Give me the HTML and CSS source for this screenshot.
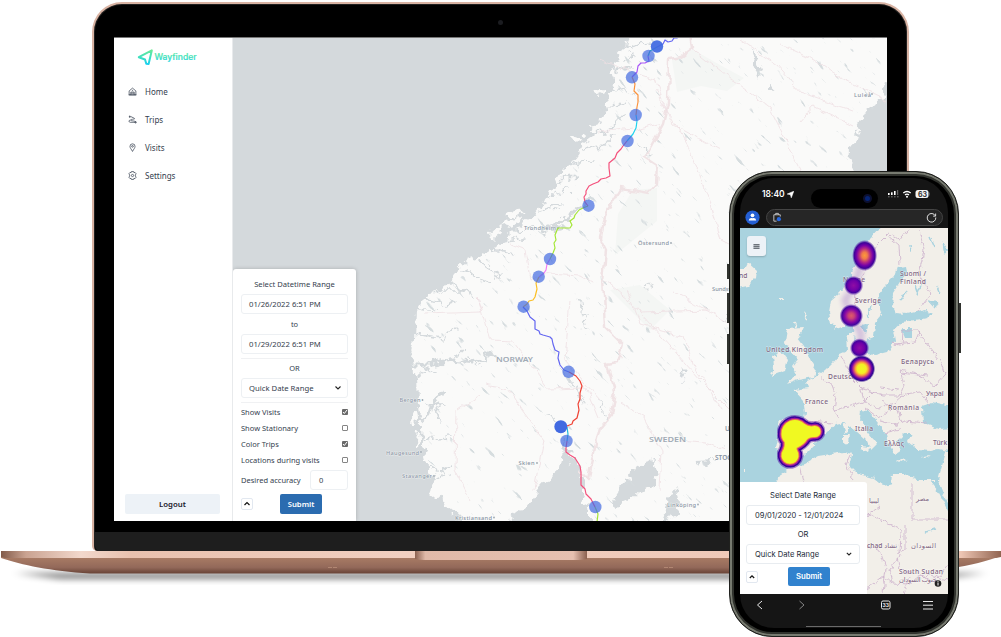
FILE: index.html
```html
<!DOCTYPE html>
<html lang="en">
<head>
<meta charset="utf-8">
<title>Wayfinder</title>
<link rel="stylesheet" href="styles.css">
</head>
<body>
<main class="stage">
  <section class="laptop">
    <div class="lid">
      <div class="camera"></div>
      <div class="display">
        <aside class="sidebar">
          <svg class="logo" viewBox="0 0 62 18">
            <defs><linearGradient id="brand" gradientUnits="userSpaceOnUse" x1="0" y1="1" x2="0" y2="17"><stop offset="0" stop-color="#70ec92"/><stop offset=".5" stop-color="#3fe0bd"/><stop offset="1" stop-color="#14cdf5"/></linearGradient></defs>
            <path d="M1.800 9.200 14.800 2.400 11.600 16 9.300 15.800 8 11.500Z" fill="none" stroke="url(#brand)" stroke-width="2" stroke-linejoin="round"/>
            <text x="17.500" y="11.600" textLength="42" lengthAdjust="spacingAndGlyphs" fill="url(#brand)" stroke="url(#brand)" class="brand-text">Wayfinder</text>
          </svg>
          <nav class="nav">
            <a class="nav-item"><svg viewBox="0 0 16 16"><path d="M2 7 8 2l6 5v7H2ZM1 14h14M5 14V9h6v5M5 11h6M7 6h2"/></svg>Home</a>
            <a class="nav-item"><svg viewBox="0 0 16 16"><path d="M3 1v4M1.500 3h4l6 3c2 2-7 1-7 3s10 1 9 4H4c-3 0-3-4 0-4"/><circle cx="13.500" cy="13" r="1.300"/></svg>Trips</a>
            <a class="nav-item"><svg viewBox="0 0 16 16"><path d="M8 15C6 11 3.500 9 3.500 6a4.500 4.500 0 0 1 9 0c0 3-2.500 5-4.500 9Z"/><circle cx="8" cy="6" r="1.500"/></svg>Visits</a>
            <a class="nav-item"><svg viewBox="0 0 16 16"><path d="m6 1-.5 2-2-.5L1.500 5 3 7v2l-1.500 2 2 2.500 2-.5.5 2h4l.5-2 2 .5 2-2.500L13 9V7l1.500-2-2-2.500-2 .5L10 1Z"/><circle cx="8" cy="8" r="2"/></svg>Settings</a>
          </nav>
          <button class="logout">Logout</button>
        </aside>
        <div class="map-pane">
          <svg class="map" viewBox="233 38 654 483">
            <defs>
              <filter id="ragged" x="-5%" y="-5%" width="110%" height="110%"><feTurbulence type="fractalNoise" baseFrequency=".11" numOctaves="3" seed="4"/><feDisplacementMap in="SourceGraphic" scale="15" xChannelSelector="R" yChannelSelector="G"/></filter>
              <filter id="wobble" x="-5%" y="-5%" width="110%" height="110%" color-interpolation-filters="sRGB"><feTurbulence type="fractalNoise" baseFrequency=".09" numOctaves="2" seed="9"/><feDisplacementMap in="SourceGraphic" scale="8" xChannelSelector="R" yChannelSelector="G"/></filter>
              <filter id="lakes" x="0" y="0" width="100%" height="100%" color-interpolation-filters="sRGB"><feTurbulence type="fractalNoise" baseFrequency=".06 .26" numOctaves="3" seed="12"/><feColorMatrix values="0 0 0 0 .84  0 0 0 0 .865  0 0 0 0 .875  10 0 0 0 -7"/></filter>
              <clipPath id="landclip"><path d="M625 38 612 60 614 88 606 115 596 140 570 168 545 203 510 240 478 266 448 285 425 302 420 340 418 370 424 400 426 435 428 460 445 495 470 519 498 519 523 503 545 475 562 450 577 470 588 521 887 521V190L846 180 850 140 887 90V38Z"/></clipPath>
            </defs>
            <rect x="233" y="38" width="654" height="483" fill="#d4d9dc"/>
            <g filter="url(#ragged)">
              <path fill="#fafaf9" d="M632 20 626 46 615 58 611 74 617 86 609 96 605 114 597 124 593 138 581 146 571 161 561 174 552 190 541 205 531 218 515 229 503 241 489 253 469 260 454 274 443 287 426 294 416 310 415 340 411 356 417 377 418 402 422 424 423 448 428 468 434 478 431 494 444 504 460 518 471 530H495L521 510 538 491 551 477 561 468 564 441 571 456 578 469 584 479 584 500 590 513 590 540 910 540V190L870 188 850 172 851 148 858 128 869 108 883 98 887 70 910 50V20Z"/>
              <g fill="#fafaf9"><ellipse cx="600" cy="92" rx="4" ry="4"/><ellipse cx="576" cy="139" rx="7" ry="3"/><ellipse cx="595" cy="128" rx="5" ry="3"/><ellipse cx="496" cy="232" rx="4" ry="7" transform="rotate(48 496 232)"/><ellipse cx="515" cy="213" rx="3" ry="8" transform="rotate(65 515 213)"/><ellipse cx="512" cy="222" rx="3" ry="12" transform="rotate(65 512 222)"/><ellipse cx="418" cy="440" rx="2" ry="8"/><ellipse cx="415" cy="417" rx="3" ry="9"/></g>
              <g fill="#d4d9dc"><path d="M635 467 654 461 658 474 653 488 639 492 627 502 615 507 613 501 625 482 632 472ZM671 494 677 487 679 502 669 523 661 532 667 505ZM755 50 762 69 759 79 751 60ZM769 80 775 91 765 90ZM695 462 715 461 706 466ZM678 368 687 377 682 381Z"/></g>
              <g fill="none" stroke="#d4d9dc" stroke-linecap="round" stroke-linejoin="round">
                <path stroke-width="3" d="M543 229 555 225 570 215 581 206 591 196M548 228 563 227M413 364 433 364 453 360 473 362 493 353M416 425 428 414 433 400 448 392M563 440 565 461M541 226 544 235"/>
                <path stroke-width="1.600" d="M410 307 438 312M420 297 445 305 455 301M430 292 445 291 463 291M448 280 474 297M463 270 491 284M479 260 501 275M493 249 515 254M413 334 443 338 455 328M422 365 436 374M470 358 480 366M427 404 443 407M420 445 436 438 450 437M417 374 430 369M435 404 440 420M425 464 438 470M435 475 450 468M455 359 465 347M502 240 523 238M514 231 536 229M540 211 561 207M547 196 570 188M559 180 577 178M569 164 591 160M582 149 602 146 615 135M590 133 607 132 625 112M599 110 625 101M607 87 633 94M611 73 630 67M613 61 637 56M621 50 650 42M618 41 633 49"/>
                <path stroke-width="1.100" d="M550 414 560 428M558 365 578 390 582 401M638 144 650 156M640 305 650 285M580 300 586 330M600 400 605 420M720 320 740 315"/>
              </g>
            </g>
            <g clip-path="url(#landclip)">
              <path fill="#f4f6f4" d="M672 60 692 49 720 65 744 78 727 91 701 86 677 92ZM633 190 657 188 657 221 615 255 618 214ZM610 290 640 285 670 310 650 330Z"/>
              <g transform="rotate(48 560 280)"><rect x="80" y="-200" width="960" height="960" filter="url(#lakes)"/></g>
            </g>
            <g fill="none" stroke="#efe0e3" stroke-width=".8" filter="url(#wobble)">
              <path stroke="#f0e3e5" stroke-width="2.400" d="M690 30 693 48 681 57 669 59 668 103 663 124 645 157 657 165 656 184 648 193 621 188 604 216 600 238 606 250 603 280 606 327 623 344 618 363 607 365 615 391 611 414 600 427 590 469 588 479 580 470"/>
              <path d="M633 128 598 132M634 130 660 124M510 244 525 250 530 280 548 273 580 275 594 283M477 297 481 312 424 314M477 297 490 340 513 341 548 389 586 388 598 418M485 385 510 390 522 410 544 440 534 490M458 410 480 395M456 410 455 470 470 500M600 60 655 80 672 124 720 150M692 49 735 82 770 108 801 171M740 40 777 65 800 92 851 110M780 44 815 60 840 78 887 100M800 122 813 107 852 125M604 280 628 300 663 338 700 380 740 420M627 290 641 325 684 337 694 366 722 410M672 290 740 330M680 440 704 442 725 450M620 402 644 418 662 452 660 490M640 312 710 310M570 300 565 360 600 400M655 90 690 150 710 201 720 240 740 250"/>
            </g>
            <g class="map-label">
              <text x="524" y="230" textLength="32">Trondheim</text><text x="638" y="245" textLength="31">Östersund</text><text x="854" y="96.500" textLength="17">Luleå</text>
              <text x="399.500" y="402" textLength="21">Bergen</text><text x="386" y="454.500" textLength="33">Haugesund</text><text x="402" y="477.500" textLength="30">Stavanger</text><text x="518.500" y="465" textLength="16">Skien</text><text x="455" y="519.500" textLength="37">Kristiansand</text><text x="667" y="506.500" textLength="29">Linköping</text><text x="712" y="291">Sundsvall</text>
              <g fill="#9da8b1"><circle cx="558" cy="228" r=".9"/><circle cx="671" cy="243" r=".9"/><circle cx="872" cy="94" r=".9"/><circle cx="422.500" cy="400" r=".9"/><circle cx="421" cy="452" r=".9"/><circle cx="434" cy="476" r=".9"/><circle cx="537" cy="463" r=".9"/><circle cx="494" cy="517.500" r=".9"/><circle cx="698" cy="504.500" r=".9"/></g>
              <g class="country"><text x="496" y="361.500" textLength="37" lengthAdjust="spacingAndGlyphs">NORWAY</text><text x="649" y="441.500" textLength="37" lengthAdjust="spacingAndGlyphs">SWEDEN</text></g>
              <text x="715" y="459.500" class="city">STOCKHOLM</text><text x="725" y="431" class="city">UPPSALA</text>
            </g>
            <g class="route">
              <path stroke="#6366f1" d="M657 47 663 44 665 40 668 42 672 41 674 38 677 38 679 36"/>
              <path stroke="#20b4b8" d="M648 56 650 51 657 47"/>
              <path stroke="#a855f7" d="M648 56 649 61 645 63 641 63 638 66 637 72 632 77"/>
              <path stroke="#fb923c" d="M632 77 635 84 634 91 638 95 638 102 637 107 636 115"/>
              <path stroke="#22d3ee" d="M636 115 637 121 636 128 633 134 627 141"/>
              <path stroke="#f4517c" d="M627 141 623 146 621 149 617 153 615 158 609 163 609 168 610 176 606 178 601 179 598 182 593 184 589 186 586 191 586 194 584 197 585 202 588 206"/>
              <path stroke="#a3e635" d="M588 206 583 208 579 210 575 215 574 218 570 221 572 225 570 228 558 228 555 235 556 240 554 243 555 248 553 253 550 259"/>
              <path stroke="#f27cf2" d="M550 259 547 264 546 270 544 273 539 277"/>
              <path stroke="#fbbf24" d="M539 277 536 283 537 289 535 297 533 300 529 301 527 304 523 307"/>
              <path stroke="#6366f1" d="M523 307 527 311 530 317 535 321 535 329 539 331 540 334 543 335 550 337 552 339 553 344 555 350 559 352 558 358 560 365 564 370 569 372"/>
              <path stroke="#ef4335" d="M569 372 576 376 580 381 582 386 580 393 580 399 578 404 579 410 577 418 573 421 572 424 567 426 561 427"/>
              <path stroke="#22b8dd" d="M567 427 568 434 567 441"/>
              <path stroke="#f4517c" d="M567 441 566 448 566 452 570 455 575 458 580 466 581 472 581 485 585 489 586 494 591 499 595 507"/>
              <path stroke="#a3e635" d="M595 507 598 514 597 522"/>
            </g>
            <g fill="#4169e1" fill-opacity=".7"><circle cx="648.500" cy="56" r="6.200"/><circle cx="632" cy="77.300" r="6.200"/><circle cx="635.700" cy="115" r="6.200"/><circle cx="627.500" cy="141" r="6.200"/><circle cx="588.500" cy="205.700" r="6.200"/><circle cx="550" cy="259" r="6.200"/><circle cx="538.700" cy="276.700" r="6.200"/><circle cx="523.600" cy="306.700" r="6.200"/><circle cx="568.600" cy="371.800" r="6.200"/><circle cx="566.500" cy="441" r="6.200"/><circle cx="595.300" cy="507" r="6.200"/><circle cx="657" cy="46.500" r="6.200" fill-opacity=".93"/><circle cx="560.800" cy="426.700" r="6.500" fill-opacity="1"/></g>
          </svg>
          <form class="filters">
            <h2>Select Datetime Range</h2>
            <div class="field">01/26/2022 6:51 PM</div>
            <p class="to">to</p>
            <div class="field">01/29/2022 6:51 PM</div>
            <p class="or">OR</p>
            <div class="field select">Quick Date Range<svg viewBox="0 0 8 8"><path d="m1.500 2.500 2.500 2.500 2.500-2.500"/></svg></div>
            <div class="checks">
              <div>Show Visits<span class="box checked"><svg viewBox="0 0 6 6"><path d="m1 3 1.300 1.500L5 1"/></svg></span></div>
              <div>Show Stationary<span class="box"></span></div>
              <div>Color Trips<span class="box checked"><svg viewBox="0 0 6 6"><path d="m1 3 1.300 1.500L5 1"/></svg></span></div>
              <div>Locations during visits<span class="box"></span></div>
            </div>
            <div class="accuracy">Desired accuracy<span class="field">0</span></div>
            <div class="actions"><span class="collapse"><svg viewBox="0 0 8 8"><path d="m1.500 5 2.500-2.500L6.500 5"/></svg></span><span class="submit">Submit</span></div>
          </form>
        </div>
      </div>
      <div class="hinge"></div>
    </div>
    <svg class="base" viewBox="0 550 1001 50">
      <defs>
        <linearGradient id="under" x1="0" y1="0" x2="0" y2="1"><stop offset="0" stop-color="#b08670"/><stop offset=".15" stop-color="#a67963"/><stop offset=".65" stop-color="#93695a"/><stop offset="1" stop-color="#684336"/></linearGradient>
        <linearGradient id="deck"><stop offset="0" stop-color="#825b4a"/><stop offset=".025" stop-color="#caa391"/><stop offset=".08" stop-color="#f2d8cc"/><stop offset=".13" stop-color="#e9c1ae"/><stop offset=".4" stop-color="#f1cfc0"/><stop offset=".96" stop-color="#edc5b3"/><stop offset="1" stop-color="#916450"/></linearGradient>
        <linearGradient id="notch"><stop offset="0" stop-color="#8b6150"/><stop offset=".06" stop-color="#e0b9a8"/><stop offset=".92" stop-color="#e6c0b0"/><stop offset="1" stop-color="#8b6150"/></linearGradient>
        <filter id="soft" x="-5%" y="-100%" width="110%" height="300%"><feGaussianBlur stdDeviation="4 3"/></filter>
      </defs>
      <path d="M15 573H986L940 579H60Z" fill="#000" opacity=".5" filter="url(#soft)"/>
      <path d="M1 556H1001C975 566 930 573.500 880 573.500H90C50 571 22 565 1 558Z" fill="url(#under)"/>
      <path d="M1 551H1001V557L996 558H5L1 557Z" fill="url(#deck)"/>
      <path d="M415 551H587V559Q583 560 578 560H424Q419 560 415 559Z" fill="url(#notch)"/>
      <path d="M328 567.500h4M333 567.500h4M664 567.500h4M669 567.500h4" stroke="#b98e79" stroke-width=".8"/>
    </svg>
  </section>

  <section class="phone">
    <i class="key key-a"></i><i class="key key-b"></i><i class="key key-c"></i><i class="key key-d"></i>
    <div class="phone-screen">
      <div class="status">
        <span class="time">18:40</span>
        <svg class="nav-arrow" viewBox="0 0 8 8"><path d="M7.800.2 4.900 7.800 3.900 4.200.2 3.500Z" fill="#fff" stroke="#fff" stroke-width=".6"/></svg>
        <span class="island"><i></i></span>
        <svg class="radio" viewBox="0 0 42 10"><g fill="#fff"><rect x="0" y="4" width="1.600" height="2"/><rect x="3" y="3.300" width="1.600" height="2.700"/><rect x="6" y="2" width="1.600" height="4"/><rect x="9" y="1" width="1.200" height="5" opacity=".35"/><path d="M0 7.800h1.600M3 7.800h1.600M6 7.800h1.600M9 7.800h1.600" stroke="#777" stroke-width="1"/></g><path d="M15.300 4Q19 1 22.700 4M17 5.900q2-1.500 4 0" fill="none" stroke="#fff" stroke-width="1.400"/><circle cx="19" cy="7.800" r="1" fill="#fff"/><rect x="27.500" y="1" width="13" height="8" rx="2.500" fill="#f4f4f4"/><path d="M41 3.500v3" stroke="#888"/><text x="30" y="7.600">63</text></svg>
      </div>
      <div class="urlbar">
        <svg class="avatar" viewBox="0 0 16 16"><circle cx="8" cy="8" r="7.600" fill="#2560d4"/><circle cx="8" cy="5.700" r="2" fill="#fff"/><path d="M4 11.200q.5-3 4-2.500 3.500-.5 4 2.500Z" fill="#fff"/></svg>
        <div class="address"><svg viewBox="0 0 12 12"><path d="M4 3V1.500h3V3M2 3h7v2M5 10H2V3" fill="none" stroke="#c9c9c9"/><circle cx="7.500" cy="7.800" r="2.300" fill="#2767dd"/></svg><svg viewBox="0 0 12 12"><path d="M10.200 4.200A4.700 4.700 0 1 0 10.700 6M10.500 1.700v2.800H7.800" fill="none" stroke="#eee"/></svg></div>
      </div>
      <div class="phone-map">
        <svg class="map" viewBox="740 228 208 366">
          <defs>
            <filter id="coast" x="-5%" y="-5%" width="110%" height="110%"><feTurbulence type="fractalNoise" baseFrequency=".18" numOctaves="2" seed="7"/><feDisplacementMap in="SourceGraphic" scale="6" xChannelSelector="R" yChannelSelector="G"/></filter>
            <filter id="glow" x="-50%" y="-50%" width="200%" height="200%"><feGaussianBlur stdDeviation="2.500"/></filter>
            <filter id="edge" x="-20%" y="-20%" width="140%" height="140%"><feGaussianBlur stdDeviation=".7"/></filter>
            <radialGradient id="hot"><stop offset="0" stop-color="#fc993b"/><stop offset=".22" stop-color="#f07c4a"/><stop offset=".45" stop-color="#b62c82"/><stop offset=".66" stop-color="#7301a8"/><stop offset=".83" stop-color="#3d0398"/><stop offset="1" stop-color="#4a10a0" stop-opacity="0"/></radialGradient>
            <radialGradient id="warm"><stop offset="0" stop-color="#dc5c68"/><stop offset=".25" stop-color="#c94278"/><stop offset=".55" stop-color="#8708a6"/><stop offset=".8" stop-color="#41049d"/><stop offset="1" stop-color="#4a10a0" stop-opacity="0"/></radialGradient>
            <radialGradient id="cool"><stop offset="0" stop-color="#8f0da4"/><stop offset=".5" stop-color="#7001a8"/><stop offset=".75" stop-color="#44049e"/><stop offset="1" stop-color="#6b35b0" stop-opacity="0"/></radialGradient>
            <radialGradient id="peak"><stop offset="0" stop-color="#f0f921"/><stop offset=".34" stop-color="#f3ef27"/><stop offset=".48" stop-color="#fb9f3a"/><stop offset=".62" stop-color="#c43e7f"/><stop offset=".75" stop-color="#6a00a8"/><stop offset=".87" stop-color="#2d078f"/><stop offset="1" stop-color="#2d078f" stop-opacity="0"/></radialGradient>
            <path id="spain" d="M784 434A11 11 0 0 1 803 426Q808 430 815 428.500A3 3 0 0 1 815 434.500Q808 434 805 438Q802 443 795 446Q793 448 795 452A6 6 0 1 1 785 452Q788 447 787 441Q784 438 784 434Z"/>
          </defs>
          <rect x="740" y="228" width="208" height="366" fill="#aad3df"/>
          <g fill="#f2efe9" filter="url(#coast)">
            <path d="M730 268 745 268 748 262 757 270 756 278 748 286 730 290Z"/>
            <path d="M885 222 871 238 865 246 857 262 849 281 839 294 831 301 829 312 831 323 836 329 845 326 852 322 854 334 858 345 863 347 866 340 874 337 875 323 882 315 879 307 878 295 885 286 894 277 897 268 907 267 908 272 901 280 893 293 892 305 896 313 907 314 926 310 932 314 928 318 902 322 893 330 895 341 888 352 876 355 866 354 858 351 854 345 855 330 846 336 847 351 840 354 832 363 824 371 814 378 806 382 808 388 794 390 803 400 805 413 803 422 792 421 780 419 778 427 778 438 776 449 785 452 789 460 804 456 815 445 816 438 829 430 836 424 844 422 855 430 867 441 871 450 877 444 866 430 860 418 861 410 868 411 878 423 886 433 888 443 895 454 901 450 897 441 904 434 912 434 908 442 918 450 930 451 938 449 955 452V428L938 429 923 423 922 408 933 402 955 407V222Z"/>
            <path d="M770 490 781 474 790 468 804 464 818 456 844 452 852 454 849 465 858 474 874 478 884 486 891 484 892 474 904 474 919 480 938 480 946 452 955 452V605H730V490Z"/>
            <path d="M787 329 803 328 798 338 804 346 811 361 816 369 814 377 798 380 787 384 796 374 792 367 798 359 790 350 785 342Z"/><path d="M773 356 782 352 788 360 785 371 771 376 774 367Z"/>
            <path d="M843 424 848 423 848 431 845 433ZM843 434 849 434 848 443 843 444ZM860 446 871 447 869 452 860 449ZM855 341 861 341 860 347 855 346ZM922 456 931 455 925 458ZM896 459 907 460 900 462Z"/>
            <path d="M780 299h4M804 313l3 5M794 322l2 5M744 471h1" stroke="#f2efe9" stroke-width="2"/>
          </g>
          <g fill="#aad3df" filter="url(#coast)"><path d="M930 481 938 491 950 514 956 514 944 496 938 481Z"/><path d="M901 328 912 328 912 338 905 338ZM928 300 939 303 936 309ZM922 406 931 403 938 411 927 411ZM860 326 868 325 866 334ZM942 240 948 250 944 255Z"/><path d="M910 245 911 252M915 286 918 295M917 295 922 283M900 300 906 291M930 237 935 248M937 286 940 294M926 532 935 529M871 305 868 317" stroke="#aad3df" stroke-width="1.500"/></g>
          <g fill="none" stroke="#cbb0cb" stroke-width=".8" filter="url(#coast)">
            <path d="M877 245 887 235 899 245 900 265M888 233 900 240 909 228M919 230 924 250 919 275 931 294 917 312M875 247 864 272 856 292 854 320M892 343 902 346 903 330 918 330 923 338 940 360 945 375 935 386 916 374 900 370 904 385 900 395 883 395 861 388 851 378 845 363 842 356M895 344 915 342 920 330M820 377 832 385 836 396 834 410 838 419M834 410 852 406 866 400 876 390M861 389 864 401 878 408 894 403 904 394M865 408 879 418 896 406M880 421 896 425 905 421 927 423M885 433 900 429M880 388 899 390M883 401 898 410 902 423M905 394 920 392 931 405M900 373 928 376M850 377 859 373M780 425 782 434 780 451M806 421 832 423M850 455 846 464 852 473 851 490M800 465 805 485M782 488 768 497M912 482V519H952M905 525V550L897 553M868 513 901 530 900 555 890 570 893 583 909 584 918 577 930 575 947 580M866 545 880 551 886 568 883 592M866 516 879 507M866 590 884 576 893 584M897 558 900 570 912 572M904 594 910 577M920 574 931 582 941 575 948 565"/>
          </g>
          <g class="place">
            <text x="739" y="278">nd</text><text x="843" y="281.500" textLength="22">Norge</text><text x="900" y="275.500" textLength="26">Suomi /</text><text x="900" y="283.500" textLength="26">Finland</text><text x="855" y="302.500" textLength="26">Sverige</text><text x="766" y="352" textLength="57">United Kingdom</text><text x="901" y="363.500" textLength="33">Беларусь</text><text x="828" y="379" textLength="43">Deutschland</text><text x="805" y="404" textLength="23">France</text><text x="926" y="396">Украї</text><text x="888" y="409.500" textLength="31">România</text><text x="855" y="431" textLength="18">Italia</text><text x="884" y="446" textLength="20">Ελλάς</text><text x="933" y="445">Türk</text><text x="869" y="502.500">ليبيا</text><text x="916" y="500.500">مصر</text><text x="867" y="548">chad تشاد</text><text x="911" y="548" textLength="25">السودان</text><text x="899" y="573.500" textLength="44">South Sudan</text><text x="899" y="582" textLength="38">جنوب السودان</text>
          </g>
          <g fill="none" stroke="#8851bd" opacity=".3" filter="url(#glow)"><path stroke-width="7" d="M862 262 853 289 845 300 851 316 861 333 860 350 862 369"/></g>
          <ellipse cx="864.600" cy="255.500" rx="12.500" ry="15.500" fill="url(#hot)"/>
          <circle cx="853.500" cy="285.500" r="9.800" fill="url(#cool)"/><circle cx="851.300" cy="315.800" r="11.800" fill="url(#warm)"/><circle cx="859.500" cy="348" r="9.800" fill="url(#cool)"/><circle cx="861.700" cy="368.800" r="13.500" fill="url(#peak)"/>
          <g filter="url(#edge)" stroke-linejoin="round"><use href="#spain" fill="#5b18a5" stroke="#5b18a5" stroke-width="15" opacity=".5"/><use href="#spain" fill="#35049a" stroke="#35049a" stroke-width="12.500"/><use href="#spain" fill="#9c179e" stroke="#9c179e" stroke-width="9.500"/><use href="#spain" fill="#ed7953" stroke="#ed7953" stroke-width="7"/><use href="#spain" fill="#f0f921" stroke="#f0f921" stroke-width="5"/></g>
          <circle cx="938" cy="583.500" r="3.300" fill="#222"/><path d="M938 582.500v3M938 581v.8" stroke="#fff"/>
        </svg>
        <span class="menu"><svg viewBox="0 0 8 8"><path d="M.5 1.900h7M.5 4h7M.5 6.100h7"/></svg></span>
        <form class="mobile-filters">
          <h2>Select Date Range</h2>
          <div class="field">09/01/2020 - 12/01/2024</div>
          <p>OR</p>
          <div class="field select">Quick Date Range<svg viewBox="0 0 8 8"><path d="m1.800 2.800 2.200 2.200 2.200-2.200"/></svg></div>
          <div class="actions"><span class="collapse"><svg viewBox="0 0 8 8"><path d="m1.800 5 2.200-2.200L6.200 5"/></svg></span><span class="submit">Submit</span></div>
        </form>
      </div>
      <svg class="toolbar" viewBox="740 594 208 33"><g fill="none" stroke="#e8e8e8"><path d="m762 601-4.500 4 4.500 4"/><path d="m799.500 601 4.500 4-4.500 4" stroke="#858585"/><rect x="881.500" y="601" width="8.500" height="8" rx="1.500"/><path d="M923 601.500h10M923 605.200h10M923 609h10"/></g><text x="882.600" y="606.900">33</text><path d="M806 626.500h75" stroke="#6a6a6a"/></svg>
    </div>
  </section>
</main>
</body>
</html>
```
FILE: styles.css
```css
* { box-sizing: border-box; }
body { margin: 0; background: #fff; font-family: "Noto Sans", sans-serif; color: #343e4e; }
h2, p { margin: 0; font-size: inherit; font-weight: 400; }
svg { display: block; flex: none; }

.stage { position: relative; width: 1001px; height: 637px; overflow: hidden; }
.laptop { padding-top: 2px; }
.lid {
  display: flex; flex-direction: column; width: 817px; height: 549px; margin-left: 92px;
  padding: 0 20px; border: 2px solid #d8b3a3; border-bottom: 0; border-radius: 30px 30px 5px 5px;
  background: #000; box-shadow: inset 0 0 0 1px #202020; overflow: hidden;
}
.camera { width: 5px; height: 5px; margin: 16px auto 12px; border-radius: 50%; background: #1b1c20; flex: none; }
.display { display: flex; width: 773px; height: 484px; border-top: 1px solid #777; background: #fff; flex: none; }
.hinge { flex: 1; margin: 11px -19px 0; background: #1e1e1e; border-radius: 0 0 5px 5px; }
.base { width: 1001px; height: 50px; margin-top: -1px; }

.sidebar { display: flex; flex-direction: column; width: 119px; padding: 10px 12px 7px 11px; border-right: 1px solid #e8eaec; flex: none; }
.logo { width: 62px; height: 18px; margin-left: 12px; overflow: visible; }
.brand-text { font: 500 8.300px/1.6 Inter, sans-serif; stroke-width: .2px; }
.nav { display: flex; flex-direction: column; gap: 17px; padding: 19.500px 0 0 3px; }
.nav-item { display: flex; align-items: center; gap: 8px; height: 11px; font-size: 8px; }
.nav-item svg { width: 9px; height: 9px; fill: none; stroke: #3a4352; stroke-width: 1.300; }
.logout { height: 20px; margin-top: auto; border: 0; border-radius: 2px; background: #edf2f7; color: #1a202c; font: 600 7.800px "Noto Sans", sans-serif; }

.map-pane { position: relative; width: 654px; overflow: hidden; }
.map { width: 100%; height: 100%; }
.map-label { font: 500 5.700px "Noto Sans", sans-serif; fill: #8793a3; stroke: #fafaf9; stroke-width: .6px; paint-order: stroke; }
.country { font-size: 7.500px; font-weight: 600; fill: #a0aab5; }
.city { font-size: 6.500px; font-weight: 600; }
.route path { fill: none; stroke-width: 1.200; stroke-linejoin: round; }

.filters {
  position: absolute; left: 0; bottom: 0; display: flex; flex-direction: column; width: 123px; height: 252px;
  padding: 9.500px 8px 0; border-radius: 3px 3px 0 0; background: #fff; box-shadow: 0 0 4px #0003; font-size: 7.500px;
}
.filters h2, .filters p { text-align: center; line-height: 11px; flex: none; }
.filters h2 { font-size: 7.600px; }
.field { display: flex; align-items: center; justify-content: space-between; height: 20px; padding: 0 7px; border: 1px solid #edf0f3; border-radius: 3px; flex: none; }
.filters > .field { font-size: 7.700px; }
.filters h2 + .field { margin-top: 4px; }
.filters .to { margin: 5px 0 4px; }
.filters .or { margin-top: 4px; padding: 4.500px 0 4px; border-top: 1px solid #f0f1f3; }
.select svg { width: 8px; height: 8px; fill: none; stroke: #222; stroke-width: 1.100; margin-right: -2px; }
.checks { display: flex; flex-direction: column; margin-top: 4px; padding-top: 1px; border-top: 1px solid #f0f1f3; }
.checks div { display: flex; align-items: center; justify-content: space-between; height: 16px; }
.box { width: 6px; height: 6px; border: 1px solid #858585; border-radius: 1px; }
.checked { border: 0; background: #6a6a6a; }
.checked svg { width: 6px; height: 6px; fill: none; stroke: #fff; stroke-width: 1; }
.accuracy { display: flex; align-items: center; justify-content: space-between; margin-top: 2px; }
.accuracy .field { width: 38px; padding-left: 8px; }
.actions { display: flex; align-items: center; margin-top: 4px; }
.collapse { display: grid; place-items: center; width: 12px; height: 12px; border: 1px solid #e2e8f0; border-radius: 2px; }
.collapse svg { width: 8px; height: 8px; fill: none; stroke: #111; stroke-width: 1.200; }
.submit { display: grid; place-items: center; width: 42px; height: 20px; margin-left: 27px; border-radius: 2px; background: #2b6cb0; color: #fff; font-size: 7.700px; font-weight: 600; }

.phone {
  position: absolute; left: 729px; top: 171px; width: 230px; height: 466px; padding: 5px 6px 5px;
  border: 1px solid #20211e; border-radius: 43px; background: #000;
  box-shadow: inset 0 0 0 2px #777a70, inset 0 0 0 4px #30322d;
}
.key { position: absolute; left: -3px; width: 2px; background: #30322e; }
.key-a { top: 92px; height: 15px; }
.key-b { top: 121px; height: 30px; }
.key-c { top: 162px; height: 30px; }
.key-d { left: 229px; top: 131px; height: 50px; }
.phone-screen { display: flex; flex-direction: column; width: 208px; height: 450px; margin: 1px auto 0 4px; overflow: hidden; border-radius: 34px; background: #151515; font-family: Inter, sans-serif; }
.status { display: flex; align-items: center; height: 24px; padding: 4px 15px 0 22px; margin: 2px 0 6px; flex: none; }
.time { width: 24px; color: #fff; font-size: 8.500px; font-weight: 600; letter-spacing: -.1px; }
.nav-arrow { width: 7px; height: 7px; margin-left: 1px; }
.island { display: flex; align-items: center; justify-content: flex-end; width: 67px; height: 19px; margin: 9px 0 0 17px; padding-right: 6px; border-radius: 10px; background: #000; }
.island i { width: 9px; height: 9px; border: 2px solid #0c1030; border-radius: 50%; background: #062474; }
.radio { width: 42px; height: 10px; margin-left: 10px; }
.radio text { font: 700 7px Inter, sans-serif; fill: #333; }
.urlbar { display: flex; align-items: center; height: 17px; padding: 0 5px; gap: 6px; margin-top: -1px; flex: none; }
.avatar { width: 15px; height: 15px; }
.address { display: flex; align-items: center; justify-content: space-between; width: 177px; height: 17px; padding: 0 5px; border: 1px solid #454545; border-radius: 9px; background: #262626; }
.address svg { width: 11px; height: 11px; }
.phone-map { position: relative; height: 366px; margin-top: 2px; flex: none; }
.place { font: 500 6.700px "Noto Sans", "DejaVu Sans", sans-serif; fill: #7d6380; stroke: #ffffff99; stroke-width: .8px; paint-order: stroke; }
.menu { position: absolute; left: 7px; top: 8px; display: grid; place-items: center; width: 19px; height: 20px; border-radius: 3px; background: #edf2f7; box-shadow: 0 1px 2px #0003; }
.menu svg { width: 7px; height: 7px; stroke: #6c737b; stroke-width: 1.500; }
.mobile-filters { position: absolute; left: 0; bottom: 0; width: 127px; height: 112px; padding: 8px 7px 0 6px; border-radius: 0 3px 0 0; background: #fff; color: #222b38; font-size: 7.600px; }
.mobile-filters h2, .mobile-filters p { text-align: center; line-height: 11px; }
.mobile-filters h2 { margin-bottom: 4px; }
.mobile-filters p { margin: 4px 0; }
.mobile-filters .field { padding: 0 8px; border-color: #e8ecf0; }
.mobile-filters .actions { margin-top: 3px; }
.mobile-filters .submit { margin-left: 30px; height: 19px; background: #3182ce; }
.mobile-filters .field:not(.select) { font-size: 7.500px; }
.toolbar { width: 208px; height: 33px; }
.toolbar text { font: 700 5px Inter, sans-serif; fill: #eee; }
```
